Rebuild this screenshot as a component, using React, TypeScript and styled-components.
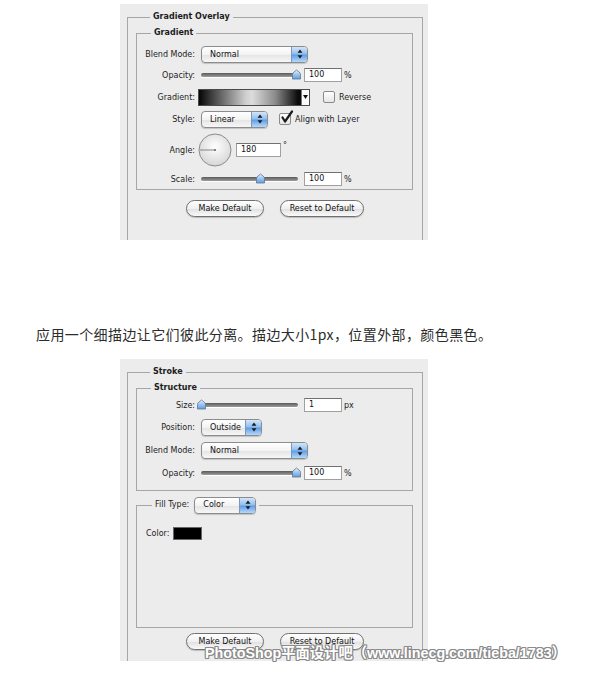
import styled, { createGlobalStyle } from "styled-components";

const GlobalStyle = createGlobalStyle`
  html, body { margin: 0; padding: 0; background: #fff; }
`;

const Page = styled.div`
  position: relative;
  width: 614px;
  height: 673px;
  overflow: hidden;
  display: flex;
  flex-direction: column;
  background: #fff;
`;

// grey screenshot of the photoshop dialog
const Shot = styled.section<{ $top: number; $h: number }>`
  flex: none;
  box-sizing: border-box;
  margin: ${(p) => p.$top}px 0 0 120px;
  width: 308px;
  height: ${(p) => p.$h}px;
  padding: 7px 5px 0 7px;
  background: #ececec;
  overflow: hidden;
  font-family: "DejaVu Sans", "Liberation Sans", sans-serif;
  font-size: 8px;
  color: #1c1c1c;
`;

const Group = styled.fieldset<{ $pad: string; $mt?: number; $h?: number }>`
  box-sizing: border-box;
  margin: ${(p) => p.$mt ?? 0}px 0 0;
  padding: ${(p) => p.$pad};
  min-width: 0;
  border: 1px solid #a6a6a6;
  ${(p) => (p.$h ? `height: ${p.$h}px;` : "")}
`;

const Legend = styled.legend<{ $ml?: number }>`
  margin-left: ${(p) => p.$ml ?? 14}px;
  padding: 0 3px;
  font-weight: bold;
  line-height: 12px;
`;

const LegendInline = styled.span`
  display: inline-flex;
  align-items: center;
  gap: 5px;
  font-weight: normal;
  height: 16px;
`;

const Row = styled.div<{ $h: number }>`
  display: grid;
  grid-template-columns: 58px auto;
  column-gap: 6px;
  align-items: center;
  height: ${(p) => p.$h}px;
`;

const Label = styled.span`
  text-align: right;
  white-space: nowrap;
`;

const Cluster = styled.div<{ $gap?: number }>`
  display: flex;
  align-items: center;
  gap: ${(p) => p.$gap ?? 6}px;
`;

const Suffix = styled.span<{ $ml?: number; $up?: boolean }>`
  margin-left: ${(p) => p.$ml ?? -4}px;
  margin-bottom: ${(p) => (p.$up ? 9 : 0)}px;
`;

const SelectBox = styled.div<{ $w: number }>`
  box-sizing: border-box;
  display: flex;
  align-items: center;
  width: ${(p) => p.$w}px;
  height: 17px;
  padding-left: 8px;
  border: 1px solid #8c8c8c;
  border-radius: 4px;
  background: linear-gradient(#ffffff, #f3f3f3 50%, #e4e4e4 52%, #f7f7f7);
  box-shadow: 0 1px 1px rgba(0, 0, 0, 0.18);
  overflow: hidden;
  color: #111;
`;

const Stepper = styled.span`
  margin-left: auto;
  width: 15px;
  height: 100%;
  display: flex;
  align-items: center;
  justify-content: center;
  border-left: 1px solid #7a98bf;
  background: linear-gradient(#d3e6fa, #8fbdee 48%, #5c9ce6 52%, #b5d9fb);
`;

const SliderWrap = styled.div`
  position: relative;
  width: 97px;
  height: 12px;
  display: flex;
  align-items: center;
`;

const Track = styled.div`
  width: 100%;
  height: 4px;
  border-radius: 2px;
  background: linear-gradient(#5a5a5a, #9c9c9c);
  box-shadow: 0 1px 0 #fff;
`;

const Thumb = styled.svg`
  position: absolute;
  top: 0;
`;

const NumBox = styled.div<{ $w: number }>`
  box-sizing: border-box;
  width: ${(p) => p.$w}px;
  height: 14px;
  padding-left: 4px;
  line-height: 12px;
  background: #fff;
  border: 1px solid #a0a0a0;
  border-top-color: #707070;
  color: #111;
`;

const GradientBar = styled.div`
  box-sizing: border-box;
  display: flex;
  margin-left: -3px;
  width: 112px;
  height: 17px;
  border: 1px solid #4a4a4a;
`;

const GradientFill = styled.div`
  flex: 1;
  background: linear-gradient(90deg, #050505 0%, #3c3c3c 12%, #cfcfcf 46%, #dcdcdc 52%, #8a8a8a 75%, #0b0b0b 97%);
`;

const GradientArrow = styled.div`
  width: 7px;
  display: flex;
  align-items: center;
  justify-content: center;
  background: #fafafa;
  border-left: 1px solid #777;
`;

const CheckLabel = styled.span<{ $ml: number }>`
  display: inline-flex;
  align-items: center;
  gap: 4px;
  margin-left: ${(p) => p.$ml}px;
`;

const Box = styled.span`
  position: relative;
  box-sizing: border-box;
  width: 12px;
  height: 12px;
  border: 1px solid #8a8a8a;
  border-radius: 2px;
  background: linear-gradient(#ffffff, #e6e6e6);
`;

const Tick = styled.svg`
  position: absolute;
  left: 0;
  top: -4px;
`;

const Dial = styled.svg`
  margin-left: -3px;
  margin-right: -2px;
`;

const Buttons = styled.div<{ $mt: number }>`
  display: flex;
  justify-content: center;
  gap: 16px;
  margin-top: ${(p) => p.$mt}px;
  padding-left: 1px;
`;

const Button = styled.div<{ $w: number }>`
  box-sizing: border-box;
  width: ${(p) => p.$w}px;
  height: 17px;
  display: flex;
  align-items: center;
  justify-content: center;
  border: 1px solid #707070;
  border-radius: 9px;
  background: linear-gradient(#ffffff, #f0f0f0 50%, #e0e0e0 52%, #fafafa);
  box-shadow: 0 1px 1px rgba(0, 0, 0, 0.2);
  color: #111;
`;

const ColorRow = styled.div`
  display: flex;
  align-items: center;
  gap: 4px;
  height: 13px;
`;

const Swatch = styled.span`
  width: 29px;
  height: 13px;
  box-sizing: border-box;
  background: #000;
  border: 1px solid #666;
`;

const Caption = styled.p`
  margin: 84px 0 0;
  padding-left: 36px;
  height: 20px;
  line-height: 20px;
  font-family: "Noto Sans CJK SC", sans-serif;
  font-size: 14px;
  letter-spacing: 0.4px;
  color: #2c2c2c;
`;

const Watermark = styled.div`
  position: absolute;
  left: 205px;
  top: 645px;
  font-family: "Liberation Sans", "Noto Sans CJK SC", sans-serif;
  font-weight: bold;
  font-size: 14.3px;
  line-height: 17px;
  color: #fff;
  white-space: nowrap;
  text-shadow: 1px 0 0 #8a8a8a, -1px 0 0 #8a8a8a, 0 1px 0 #8a8a8a, 0 -1px 0 #8a8a8a,
    1px 1px 0 #8a8a8a, -1px -1px 0 #8a8a8a, 1px -1px 0 #8a8a8a, -1px 1px 0 #8a8a8a;
`;

function Select({ w, value }: { w: number; value: string }) {
  return (
    <SelectBox $w={w}>
      {value}
      <Stepper>
        <svg width="6" height="10" viewBox="0 0 6 10">
          <path d="M3 0.5 L5.5 3.8 H0.5 Z M3 9.5 L5.5 6.2 H0.5 Z" fill="#1b1b1b" />
        </svg>
      </Stepper>
    </SelectBox>
  );
}

function Slider({ pos }: { pos: number }) {
  return (
    <SliderWrap>
      <Track />
      <Thumb width="11" height="11" viewBox="0 0 11 11" style={{ left: pos * 97 - 5.5 }}>
        <defs>
          <linearGradient id="thumbg" x1="0" y1="0" x2="0" y2="1">
            <stop offset="0" stopColor="#e4f1fd" />
            <stop offset="0.5" stopColor="#9cc6f0" />
            <stop offset="1" stopColor="#5e9de0" />
          </linearGradient>
        </defs>
        <path d="M1.5 10 V5.5 Q1.5 4 3 3 L5.5 1 L8 3 Q9.5 4 9.5 5.5 V10 Z" fill="url(#thumbg)" stroke="#5f7591" strokeWidth="0.8" />
      </Thumb>
    </SliderWrap>
  );
}

function Check({ on, text, ml }: { on?: boolean; text: string; ml: number }) {
  return (
    <CheckLabel $ml={ml}>
      <Box>
        {on && (
          <Tick width="14" height="14" viewBox="0 0 14 14">
            <path d="M2.5 7.5 L5 11.5 L12 1.5" fill="none" stroke="#1a1a1a" strokeWidth="2.2" strokeLinecap="round" strokeLinejoin="round" />
          </Tick>
        )}
      </Box>
      {text}
    </CheckLabel>
  );
}

function AngleDial() {
  return (
    <Dial width="34" height="34" viewBox="0 0 34 34">
      <defs>
        <radialGradient id="dialg" cx="50%" cy="40%" r="60%">
          <stop offset="0" stopColor="#ffffff" />
          <stop offset="1" stopColor="#d6d6d6" />
        </radialGradient>
      </defs>
      <circle cx="17" cy="17" r="16" fill="url(#dialg)" stroke="#8c8c8c" />
      <line x1="2" y1="17" x2="17" y2="17" stroke="#6a6a6a" strokeWidth="0.8" />
      <circle cx="17" cy="17" r="1.1" fill="#6a6a6a" />
    </Dial>
  );
}

export default function App() {
  return (
    <Page>
      <GlobalStyle />

      {/* gradient overlay */}
      <Shot $top={4} $h={236}>
        <Group $pad="0 9px 0 8px" $h={260}>
          <Legend>Gradient Overlay</Legend>
          <Group $pad="5px 0 1px 0" $mt={4}>
            <Legend>Gradient</Legend>
            <Row $h={20}>
              <Label>Blend Mode:</Label>
              <Select w={107} value="Normal" />
            </Row>
            <Row $h={22}>
              <Label>Opacity:</Label>
              <Cluster>
                <Slider pos={0.98} />
                <NumBox $w={38}>100</NumBox>
                <Suffix>%</Suffix>
              </Cluster>
            </Row>
            <Row $h={22}>
              <Label>Gradient:</Label>
              <Cluster $gap={0}>
                <GradientBar>
                  <GradientFill />
                  <GradientArrow>
                    <svg width="5" height="4" viewBox="0 0 5 4">
                      <path d="M0 0 H5 L2.5 4 Z" fill="#111" />
                    </svg>
                  </GradientArrow>
                </GradientBar>
                <Check text="Reverse" ml={13} />
              </Cluster>
            </Row>
            <Row $h={22}>
              <Label>Style:</Label>
              <Cluster $gap={0}>
                <Select w={67} value="Linear" />
                <Check on text="Align with Layer" ml={11} />
              </Cluster>
            </Row>
            <Row $h={40}>
              <Label>Angle:</Label>
              <Cluster $gap={6}>
                <AngleDial />
                <NumBox $w={45}>180</NumBox>
                <Suffix $ml={-4} $up>°</Suffix>
              </Cluster>
            </Row>
            <Row $h={18}>
              <Label>Scale:</Label>
              <Cluster>
                <Slider pos={0.61} />
                <NumBox $w={38}>100</NumBox>
                <Suffix>%</Suffix>
              </Cluster>
            </Row>
          </Group>
          <Buttons $mt={10}>
            <Button $w={78}>Make Default</Button>
            <Button $w={84}>Reset to Default</Button>
          </Buttons>
        </Group>
      </Shot>

      <Caption>应用一个细描边让它们彼此分离。描边大小1px，位置外部，颜色黑色。</Caption>

      {/* stroke */}
      <Shot $top={15} $h={302}>
        <Group $pad="0 9px 0 8px" $h={320}>
          <Legend>Stroke</Legend>
          <Group $pad="1px 0 6px 0" $mt={4}>
            <Legend>Structure</Legend>
            <Row $h={20}>
              <Label>Size:</Label>
              <Cluster>
                <Slider pos={0.01} />
                <NumBox $w={38}>1</NumBox>
                <Suffix>px</Suffix>
              </Cluster>
            </Row>
            <Row $h={24}>
              <Label>Position:</Label>
              <Select w={61} value="Outside" />
            </Row>
            <Row $h={23}>
              <Label>Blend Mode:</Label>
              <Select w={107} value="Normal" />
            </Row>
            <Row $h={22}>
              <Label>Opacity:</Label>
              <Cluster>
                <Slider pos={0.98} />
                <NumBox $w={38}>100</NumBox>
                <Suffix>%</Suffix>
              </Cluster>
            </Row>
          </Group>
          <Group $pad="14px 0 87px 9px" $mt={6}>
            <Legend $ml={6}>
              <LegendInline>
                Fill Type:
                <Select w={62} value="Color" />
              </LegendInline>
            </Legend>
            <ColorRow>
              Color:
              <Swatch />
            </ColorRow>
          </Group>
          <Buttons $mt={5}>
            <Button $w={78}>Make Default</Button>
            <Button $w={84}>Reset to Default</Button>
          </Buttons>
        </Group>
      </Shot>

      <Watermark>PhotoShop平面设计吧（www.linecg.com/tieba/1783）</Watermark>
    </Page>
  );
}
